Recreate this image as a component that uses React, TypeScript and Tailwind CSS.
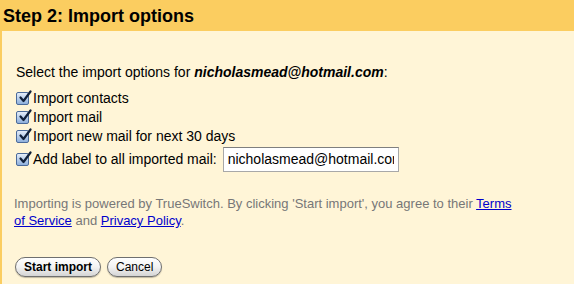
const Check = () => (
  <span className="relative inline-block w-[13px] h-[13px] shrink-0 rounded-[2px] border border-[#4a6a9a] bg-gradient-to-b from-[#e4edf9] to-[#8fb0dc]">
    <svg viewBox="0 0 14 14" className="absolute left-[1px] top-[-3px] w-[14px] h-[14px]">
      <path d="M2.5 7.5 L5.5 11 L12.5 1.5" fill="none" stroke="#10203a" strokeWidth="2.2" strokeLinecap="round" strokeLinejoin="round" />
    </svg>
  </span>
)

const Btn = ({ children }: { children: React.ReactNode }) => (
  <button className="h-[20px] px-[8px] rounded-full border border-[#6f6f6f] bg-gradient-to-b from-white via-[#f3f3f3] to-[#d4d4d4] shadow-[0_1px_1px_rgba(0,0,0,0.25)] text-[12px] text-black font-['Liberation_Sans',Arial,sans-serif] leading-none">
    {children}
  </button>
)

export default function App() {
  return (
    <div className="w-[574px] h-[284px] overflow-hidden bg-[#fff5d7] font-['Liberation_Sans',Arial,sans-serif] text-[14px] text-black">
      <div className="h-[31px] bg-[#fbcd60] pl-[3px] flex items-center">
        <h2 className="text-[18px] font-bold leading-none">Step 2: Import options</h2>
      </div>
      <div className="border-l-2 border-[#fbcd60] h-[253px] pl-[14px] pt-[33px]">
        <p className="leading-[17px]">
          Select the import options for <b><i>nicholasmead@hotmail.com</i></b>:
        </p>
        <div className="mt-[8px] flex flex-col">
          <label className="flex items-center gap-[4px] h-[19px]"><Check />Import contacts</label>
          <label className="flex items-center gap-[4px] h-[19px]"><Check />Import mail</label>
          <label className="flex items-center gap-[4px] h-[19px]"><Check />Import new mail for next 30 days</label>
          <label className="flex items-center gap-[4px] h-[26px]">
            <Check />Add label to all imported mail:
            <input
              readOnly
              value="nicholasmead@hotmail.com"
              className="ml-[2px] w-[176px] h-[25px] bg-white border border-[#a8a8a8] border-t-[#7f7f7f] px-[4px] text-[14px] outline-none font-['Liberation_Sans',Arial,sans-serif]"
            />
          </label>
        </div>
        <p className="mt-[23px] -ml-[2px] text-[13px] text-[#777] leading-[17px] whitespace-nowrap">
          Importing is powered by TrueSwitch. By clicking 'Start import', you agree to their{' '}
          <a href="#" className="text-[#0000cc] underline">Terms<br />of Service</a> and{' '}
          <a href="#" className="text-[#0000cc] underline">Privacy Policy</a>.
        </p>
        <div className="mt-[28px] -ml-[1px] flex gap-[6px]">
          <Btn><span className="font-bold">Start import</span></Btn>
          <Btn>Cancel</Btn>
        </div>
      </div>
    </div>
  )
}
